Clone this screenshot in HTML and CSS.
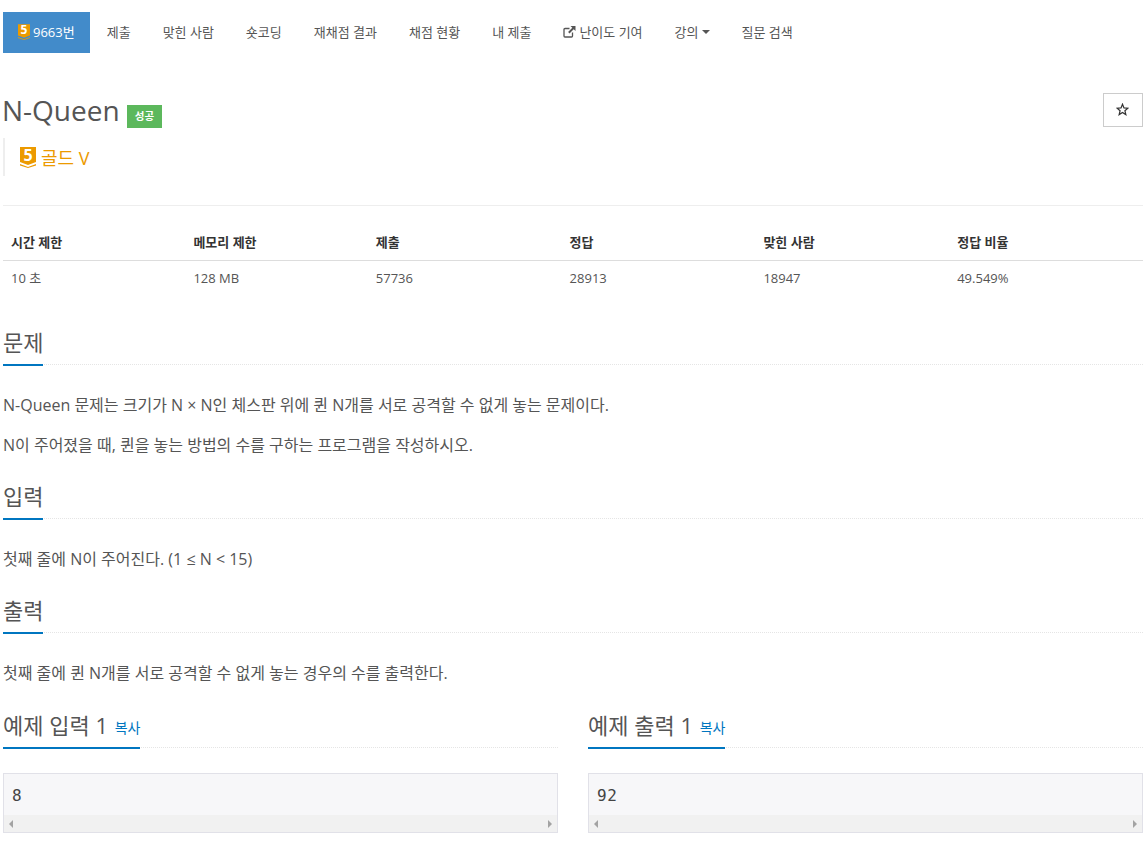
FILE: index.html
```html
<!DOCTYPE html>
<html lang="ko">
<head>
    <meta charset="UTF-8">
    <title>9663번: N-Queen</title>
    <link rel="stylesheet" href="styles.css">
</head>
<body>
    <div class="container">
        <ul class="problem-menu">
            <li class="active">
                <a href="#">
                    <svg class="tier-icon small" viewBox="0 0 16 21"><path d="M0 0H16V15L8 18L0 15Z" fill="#ec9a00"/><path d="M0 17L8 20L16 17V18.5L8 21L0 18.5Z" fill="#ec9a00"/><text x="8" y="13.5" class="tier-num">5</text></svg>
                    9663번
                </a>
            </li>
            <li><a href="#">제출</a></li>
            <li><a href="#">맞힌 사람</a></li>
            <li><a href="#">숏코딩</a></li>
            <li><a href="#">재채점 결과</a></li>
            <li><a href="#">채점 현황</a></li>
            <li><a href="#">내 제출</a></li>
            <li>
                <a href="#">
                    <svg class="ext-icon" viewBox="0 0 13 13"><path d="M9.5 7.5V11A1 1 0 0 1 8.5 12H2A1 1 0 0 1 1 11V4.5A1 1 0 0 1 2 3.5H6.5" fill="none" stroke="#555" stroke-width="1.300"/><path d="M7.5 1H12.500V6L10.700 4.200L6.500 8.400L5.100 7L9.300 2.800Z" fill="#555"/></svg>
                    난이도 기여
                </a>
            </li>
            <li><a href="#">강의<span class="caret"></span></a></li>
            <li><a href="#">질문 검색</a></li>
        </ul>

        <div class="page-header">
            <button class="star-btn" type="button">
                <svg viewBox="0 0 14 14"><path d="M7 1.300L8.600 5.300L12.800 5.600L9.600 8.300L10.600 12.500L7 10.200L3.400 12.500L4.400 8.300L1.200 5.600L5.400 5.300Z" fill="none" stroke="#333" stroke-width="1.300"/></svg>
            </button>
            <h1 class="title">N-Queen <span class="label-success">성공</span></h1>
            <blockquote class="tier">
                <svg class="tier-icon" viewBox="0 0 16 21"><path d="M0 0H16V15L8 18L0 15Z" fill="#ec9a00"/><path d="M0 17L8 20L16 17V18.5L8 21L0 18.5Z" fill="#ec9a00"/><text x="8" y="13.5" class="tier-num">5</text></svg>
                <span>골드 V</span>
            </blockquote>
        </div>

        <table class="info">
            <colgroup>
                <col class="col-a"><col class="col-a"><col class="col-b"><col class="col-b"><col class="col-b"><col class="col-c">
            </colgroup>
            <thead>
                <tr><th>시간 제한</th><th>메모리 제한</th><th>제출</th><th>정답</th><th>맞힌 사람</th><th>정답 비율</th></tr>
            </thead>
            <tbody>
                <tr><td>10 초</td><td>128 MB</td><td>57736</td><td>28913</td><td>18947</td><td>49.549%</td></tr>
            </tbody>
        </table>

        <section class="section first">
            <div class="headline"><h2>문제</h2></div>
            <p>N-Queen 문제는 크기가 N × N인 체스판 위에 퀸 N개를 서로 공격할 수 없게 놓는 문제이다.</p>
            <p>N이 주어졌을 때, 퀸을 놓는 방법의 수를 구하는 프로그램을 작성하시오.</p>
        </section>

        <section class="section">
            <div class="headline"><h2>입력</h2></div>
            <p>첫째 줄에 N이 주어진다. (1 ≤ N &lt; 15)</p>
        </section>

        <section class="section">
            <div class="headline"><h2>출력</h2></div>
            <p>첫째 줄에 퀸 N개를 서로 공격할 수 없게 놓는 경우의 수를 출력한다.</p>
        </section>

        <div class="samples">
            <section class="sample">
                <div class="headline"><h2>예제 입력 1 <a class="copy" href="#">복사</a></h2></div>
                <div class="sample-box">
                    <pre>8</pre>
                    <div class="fake-scroll"><span class="arrow-left"></span><span class="arrow-right"></span></div>
                </div>
            </section>
            <section class="sample">
                <div class="headline"><h2>예제 출력 1 <a class="copy" href="#">복사</a></h2></div>
                <div class="sample-box">
                    <pre>92</pre>
                    <div class="fake-scroll"><span class="arrow-left"></span><span class="arrow-right"></span></div>
                </div>
            </section>
        </div>
    </div>
</body>
</html>
```

FILE: styles.css
```css
body {
    margin: 0;
    background: #fff;
    color: #555;
    font-family: "Open Sans", "Noto Sans CJK KR", sans-serif;
    font-size: 14px;
}
a {
    text-decoration: none;
    color: inherit;
}
.container {
    padding: 12px 4px 16px 3px;
}

/* menu */
.problem-menu {
    display: flex;
    list-style: none;
    margin: 0;
    padding: 0;
    height: 41px;
}
.problem-menu a {
    display: flex;
    align-items: center;
    gap: 3px;
    height: 39px;
    padding: 0 16px 2px;
    font-size: 13px;
    color: #555;
    white-space: nowrap;
}
.problem-menu .active {
    margin-right: 1px;
}
.problem-menu .active a {
    background: #428bca;
    color: #fff;
    padding: 0 15px 2px;
}
.tier-icon {
    width: 16px;
    height: 21px;
    flex: none;
    overflow: visible;
}
.tier-icon.small {
    width: 12px;
    height: 16px;
}
.tier-num {
    fill: #fff;
    font-size: 16px;
    font-weight: 700;
    text-anchor: middle;
    font-family: "Open Sans", sans-serif;
}
.ext-icon {
    width: 13px;
    height: 13px;
}
.caret {
    display: inline-block;
    border-top: 4px solid #555;
    border-left: 4px solid transparent;
    border-right: 4px solid transparent;
}

/* title */
.page-header {
    position: relative;
    margin-top: 38px;
    padding-bottom: 29px;
    border-bottom: 1px solid #eee;
}
.title {
    margin: 0 0 0 -1px;
    font-size: 28px;
    font-weight: 400;
    line-height: 38px;
    color: #555;
}
.label-success {
    display: inline-block;
    vertical-align: 1px;
    width: 35px;
    height: 23px;
    line-height: 23px;
    background: #5cb85c;
    color: #fff;
    font-size: 10.5px;
    font-weight: 700;
    text-align: center;
}
.star-btn {
    position: absolute;
    top: 2px;
    right: 0;
    width: 40px;
    height: 34px;
    padding: 0 2px 2px 0;
    background: #fff;
    border: 1px solid #ccc;
    display: flex;
    align-items: center;
    justify-content: center;
}
.star-btn svg {
    width: 13px;
    height: 13px;
}
.tier {
    display: flex;
    align-items: center;
    gap: 5px;
    margin: 9px 0 0;
    height: 38px;
    padding-left: 15px;
    border-left: 2px solid #eee;
    font-size: 18px;
    color: #ec9a00;
}

/* limits table */
.info {
    width: 100%;
    margin-top: 18px;
    border-collapse: collapse;
    table-layout: fixed;
    font-size: 13px;
}
.col-a {
    width: 16%;
}
.col-b {
    width: 17%;
}
.info th {
    padding: 8px 8px 9px;
    height: 18px;
    text-align: left;
    color: #333;
    font-weight: 700;
    border-bottom: 1px solid #ddd;
}
.info td {
    padding: 7px 8px 9px;
    height: 18px;
    color: #555;
}

/* sections */
.section {
    margin-top: 24px;
}
.section.first {
    margin-top: 30px;
}
.headline {
    height: 38px;
    border-bottom: 1px dotted #e5e5e5;
}
.section .headline {
    margin-bottom: 11px;
}
.headline h2 {
    display: inline-block;
    margin: 0;
    height: 38px;
    font-size: 22px;
    font-weight: 400;
    line-height: 32px;
    color: #555;
    border-bottom: 2px solid #0076c0;
}
.section p {
    margin: 0;
    padding-top: 19px;
    font-size: 16px;
    line-height: 21px;
    color: #555;
}

/* samples */
.samples {
    display: flex;
    gap: 30px;
    margin-top: 25px;
}
.sample {
    flex: 1;
}
.copy {
    font-size: 14px;
    color: #0076c0;
    margin-left: 1px;
    vertical-align: 1px;
}
.sample-box {
    margin-top: 25px;
    border: 1px solid #e1e1e8;
    background: #f7f7f9;
}
.sample-box pre {
    margin: 0;
    height: 41px;
    line-height: 44px;
    padding: 0 8px;
    font-family: "DejaVu Sans Mono", monospace;
    font-size: 16px;
    letter-spacing: 0.5px;
    color: #444;
}
.fake-scroll {
    display: flex;
    align-items: center;
    justify-content: space-between;
    height: 17px;
    padding: 0 5px;
    background: #f1f1f1;
}
.arrow-left {
    border-right: 4px solid #a3a3a3;
    border-top: 4px solid transparent;
    border-bottom: 4px solid transparent;
}
.arrow-right {
    border-left: 4px solid #a3a3a3;
    border-top: 4px solid transparent;
    border-bottom: 4px solid transparent;
}
```
